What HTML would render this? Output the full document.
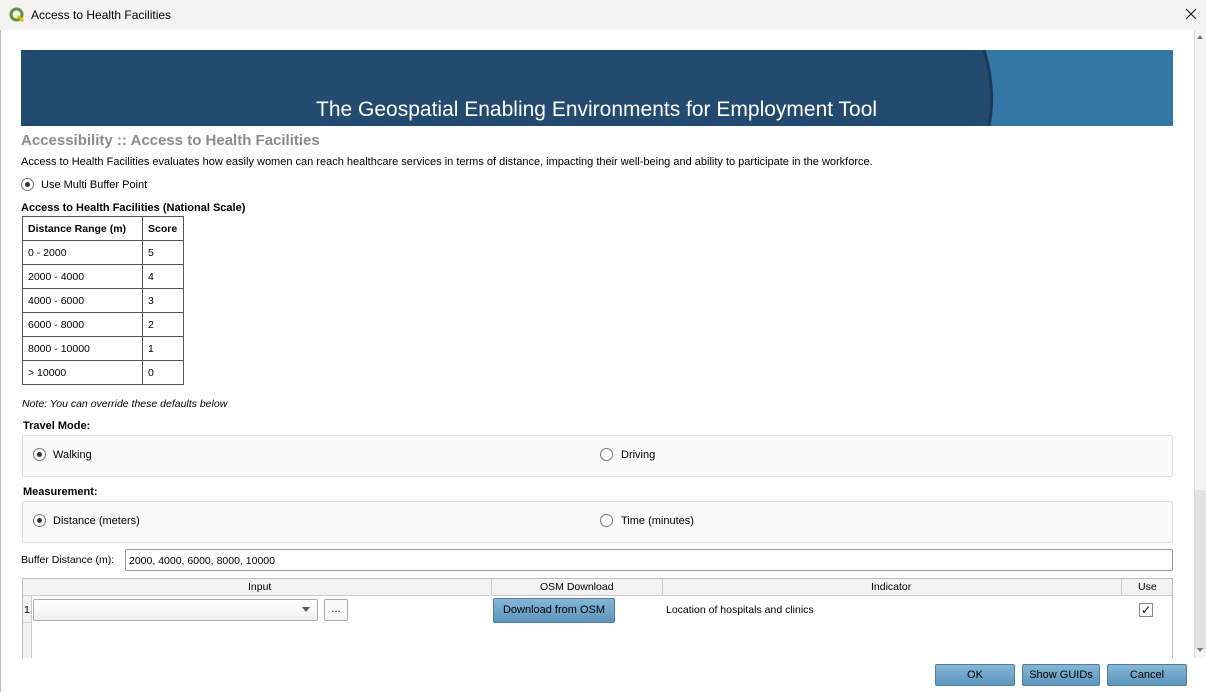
<!DOCTYPE html>
<html><head><meta charset="utf-8"><style>
*{margin:0;padding:0;box-sizing:border-box}
body{width:1206px;height:692px;background:#fff;font-family:"Liberation Sans","DejaVu Sans",sans-serif;font-size:11px;color:#000;position:relative;overflow:hidden}
.a{position:absolute;white-space:nowrap}
.rad{position:absolute;width:13px;height:13px;border:1px solid #777;border-radius:50%;background:#fff}
.rad.on::after{content:"";position:absolute;left:3px;top:3px;width:5px;height:5px;border-radius:50%;background:#333}
table{border-collapse:collapse;position:absolute;left:22px;top:216px}
td{border:1px solid #555;height:24px;padding:0 5px;font-size:10.5px}
.grp{position:absolute;left:22px;width:1151px;height:42px;border:1px solid #ddd;background:#fafafa;border-radius:2px}
.btn{position:absolute;height:22px;background:linear-gradient(#86b6d6,#5e95bd);border:1px solid #4e7fa3;border-radius:2px;text-align:center;line-height:20px;font-size:11px}
</style></head><body>
<div class="a" style="left:0;top:0;width:1206px;height:30px;background:#f3f3f3"></div>
<svg class="a" style="left:9px;top:7px" width="16" height="16" viewBox="0 0 16 16"><circle cx="7.5" cy="7.5" r="5.5" fill="none" stroke="#589632" stroke-width="3"/><path d="M9 9 L14 14" stroke="#e6b800" stroke-width="3"/></svg>
<div class="a" style="left:31px;top:8px;font-size:12px">Access to Health Facilities</div>
<svg class="a" style="left:1185px;top:8px" width="12" height="12"><path d="M1 1L11 11M11 1L1 11" stroke="#222" stroke-width="1.2"/></svg>
<div class="a" style="left:0;top:30px;width:1px;height:662px;background:#bbb"></div>
<div class="a" style="left:21px;top:50px;width:1152px;height:76px;background:#234b6f"></div>
<svg class="a" style="left:980px;top:50px" width="193" height="76" viewBox="0 0 193 76"><path d="M4 0 Q16 38 9 76 L193 76 L193 0 Z" fill="#3676a5"/><path d="M4 0 Q16 38 9 76" fill="none" stroke="#1c3a58" stroke-width="3"/></svg>
<div class="a" style="left:316px;top:98px;font-size:21px;color:#fff">The Geospatial Enabling Environments for Employment Tool</div>
<div class="a" style="left:21px;top:132px;font-size:15px;font-weight:bold;color:#8c8c8c">Accessibility :: Access to Health Facilities</div>
<div class="a" style="left:21px;top:156px">Access to Health Facilities evaluates how easily women can reach healthcare services in terms of distance, impacting their well-being and ability to participate in the workforce.</div>
<div class="rad on" style="left:21px;top:178px"></div>
<div class="a" style="left:41px;top:179px">Use Multi Buffer Point</div>
<div class="a" style="left:21px;top:202px;font-weight:bold">Access to Health Facilities (National Scale)</div>
<table>
<tr><td style="width:120px;font-weight:bold">Distance Range (m)</td><td style="width:41px;font-weight:bold">Score</td></tr>
<tr><td>0 - 2000</td><td>5</td></tr>
<tr><td>2000 - 4000</td><td>4</td></tr>
<tr><td>4000 - 6000</td><td>3</td></tr>
<tr><td>6000 - 8000</td><td>2</td></tr>
<tr><td>8000 - 10000</td><td>1</td></tr>
<tr><td>&gt; 10000</td><td>0</td></tr>
</table>
<div class="a" style="left:22px;top:398px;font-style:italic;font-size:10.5px">Note: You can override these defaults below</div>
<div class="a" style="left:23px;top:420px;font-weight:bold">Travel Mode:</div>
<div class="grp" style="top:435px"></div>
<div class="rad on" style="left:33px;top:448px"></div><div class="a" style="left:53px;top:449px">Walking</div>
<div class="rad" style="left:600px;top:448px"></div><div class="a" style="left:621px;top:449px">Driving</div>
<div class="a" style="left:23px;top:486px;font-weight:bold">Measurement:</div>
<div class="grp" style="top:501px"></div>
<div class="rad on" style="left:33px;top:514px"></div><div class="a" style="left:53px;top:515px">Distance (meters)</div>
<div class="rad" style="left:600px;top:514px"></div><div class="a" style="left:621px;top:515px">Time (minutes)</div>
<div class="a" style="left:21px;top:554px;font-size:10.5px">Buffer Distance (m):</div>
<div class="a" style="left:125px;top:549px;width:1048px;height:22px;border:1px solid #999;border-radius:2px;padding:5px 3px;font-size:10.5px">2000, 4000, 6000, 8000, 10000</div>
<div class="a" style="left:22px;top:578px;width:1151px;height:80px;border:1px solid #bbb;border-bottom:none;background:#fff"></div>
<div class="a" style="left:23px;top:579px;width:1149px;height:17px;background:#f3f3f3;border-bottom:1px solid #ccc"></div>
<div class="a" style="left:23px;top:596px;width:9px;height:62px;background:#f3f3f3;border-right:1px solid #ccc"></div>
<div class="a" style="left:23px;top:597px;width:9px;height:26px;border-bottom:1px solid #ccc;font-size:10.5px;line-height:26px;padding-left:1px">1</div>
<div class="a" style="left:491px;top:579px;width:1px;height:17px;background:#ccc"></div>
<div class="a" style="left:662px;top:579px;width:1px;height:17px;background:#ccc"></div>
<div class="a" style="left:1121px;top:579px;width:1px;height:17px;background:#ccc"></div>
<div class="a" style="left:248px;top:581px;font-size:10.5px">Input</div>
<div class="a" style="left:540px;top:581px;font-size:10.5px">OSM Download</div>
<div class="a" style="left:871px;top:581px;font-size:10.5px">Indicator</div>
<div class="a" style="left:1138px;top:581px;font-size:10.5px">Use</div>
<div class="a" style="left:33px;top:599px;width:285px;height:22px;border:1px solid #aaa;border-radius:2px;background:linear-gradient(#fff,#f0f0f0)"></div>
<div class="a" style="left:302px;top:607px;width:0;height:0;border-left:4px solid transparent;border-right:4px solid transparent;border-top:5px solid #555"></div>
<div class="a" style="left:324px;top:599px;width:24px;height:22px;border:1px solid #aaa;border-radius:2px;text-align:center;line-height:18px;background:#f8f8f8">...</div>
<div class="btn" style="left:493px;top:598px;width:122px;height:25px;line-height:23px">Download from OSM</div>
<div class="a" style="left:666px;top:604px;font-size:10.5px">Location of hospitals and clinics</div>
<div class="a" style="left:1139px;top:603px;width:14px;height:14px;border:1px solid #888;background:#fff;font-size:12px;line-height:12px;text-align:center;font-weight:bold">✓</div>
<div class="a" style="left:1194px;top:30px;width:12px;height:628px;background:#f4f4f4;border-left:1px solid #ddd"></div>
<div class="a" style="left:1195px;top:490px;width:11px;height:160px;background:#e2e2e2"></div>
<div class="a" style="left:1197px;top:35px;width:0;height:0;border-left:3px solid transparent;border-right:3px solid transparent;border-bottom:4px solid #777"></div>
<div class="a" style="left:1197px;top:648px;width:0;height:0;border-left:3px solid transparent;border-right:3px solid transparent;border-top:4px solid #777"></div>
<div class="btn" style="left:935px;top:664px;width:80px">OK</div>
<div class="btn" style="left:1022px;top:664px;width:78px">Show GUIDs</div>
<div class="btn" style="left:1107px;top:664px;width:80px">Cancel</div>
</body></html>
